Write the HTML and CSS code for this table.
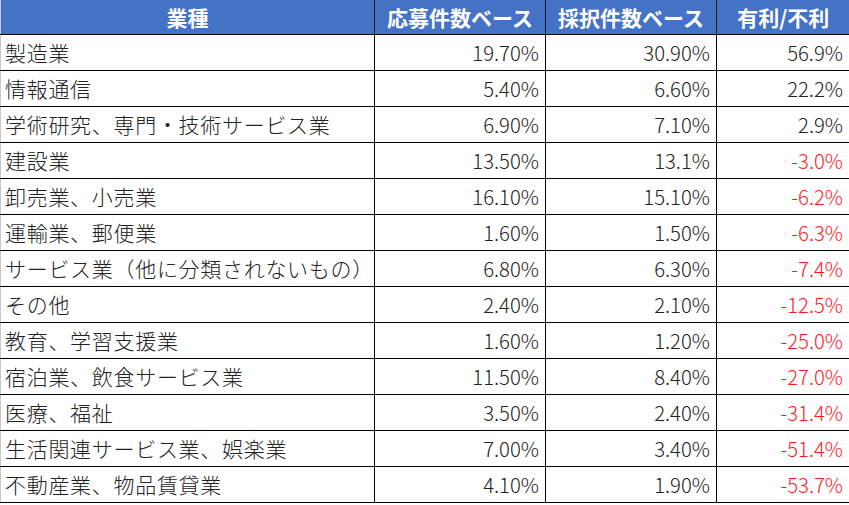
FILE: index.html
```html
<!DOCTYPE html>
<html lang="ja">
<head>
<meta charset="utf-8">
<title>業種別 有利/不利</title>
<link rel="stylesheet" href="styles.css">
</head>
<body>
<table class="tbl">
  <colgroup>
    <col class="c-name">
    <col class="c-num">
    <col class="c-num">
    <col class="c-diff">
  </colgroup>
  <thead>
    <tr>
      <th>業種</th>
      <th>応募件数ベース</th>
      <th>採択件数ベース</th>
      <th>有利/不利</th>
    </tr>
  </thead>
  <tbody>
    <tr><td class="name">製造業</td><td>19.70%</td><td>30.90%</td><td>56.9%</td></tr>
    <tr><td class="name">情報通信</td><td>5.40%</td><td>6.60%</td><td>22.2%</td></tr>
    <tr><td class="name">学術研究、専門・技術サービス業</td><td>6.90%</td><td>7.10%</td><td>2.9%</td></tr>
    <tr><td class="name">建設業</td><td>13.50%</td><td>13.1%</td><td class="neg">-3.0%</td></tr>
    <tr><td class="name">卸売業、小売業</td><td>16.10%</td><td>15.10%</td><td class="neg">-6.2%</td></tr>
    <tr><td class="name">運輸業、郵便業</td><td>1.60%</td><td>1.50%</td><td class="neg">-6.3%</td></tr>
    <tr><td class="name">サービス業（他に分類されないもの）</td><td>6.80%</td><td>6.30%</td><td class="neg">-7.4%</td></tr>
    <tr><td class="name">その他</td><td>2.40%</td><td>2.10%</td><td class="neg">-12.5%</td></tr>
    <tr><td class="name">教育、学習支援業</td><td>1.60%</td><td>1.20%</td><td class="neg">-25.0%</td></tr>
    <tr><td class="name">宿泊業、飲食サービス業</td><td>11.50%</td><td>8.40%</td><td class="neg">-27.0%</td></tr>
    <tr><td class="name">医療、福祉</td><td>3.50%</td><td>2.40%</td><td class="neg">-31.4%</td></tr>
    <tr><td class="name">生活関連サービス業、娯楽業</td><td>7.00%</td><td>3.40%</td><td class="neg">-51.4%</td></tr>
    <tr><td class="name">不動産業、物品賃貸業</td><td>4.10%</td><td>1.90%</td><td class="neg">-53.7%</td></tr>
  </tbody>
</table>
</body>
</html>
```

FILE: styles.css
```css
html, body {
  margin: 0;
  padding: 0;
  background: #ffffff;
}

body {
  font-family: "Noto Sans CJK JP", "Noto Sans", sans-serif;
  color: #222222;
}

.tbl {
  border-collapse: collapse;
  table-layout: fixed;
  width: 849px;
  font-size: 21px;
  line-height: 1;
}

.c-name { width: 374px; }
.c-num { width: 171px; }
.c-diff { width: 133px; }

.tbl th {
  background: #4472c4;
  color: #ffffff;
  font-weight: 700;
  text-align: center;
  height: 34px;
  padding: 0;
  border-left: 1px solid #1a1a1a;
  border-bottom: 1px solid #000000;
  white-space: nowrap;
}

.tbl th:first-child {
  border-left: 1px solid #c8c8c8;
}

.tbl td {
  height: 35px;
  padding: 0 6px 0 5px;
  text-align: right;
  font-size: 20.3px;
  font-weight: 300;
  border: 1px solid #000000;
  white-space: nowrap;
}

.tbl td.name {
  text-align: left;
  font-size: 21px;
  letter-spacing: 0.7px;
  padding-left: 4px;
  border-left: 1px solid #c8c8c8;
}

.tbl td.neg {
  color: #ff1a1a;
}
```
